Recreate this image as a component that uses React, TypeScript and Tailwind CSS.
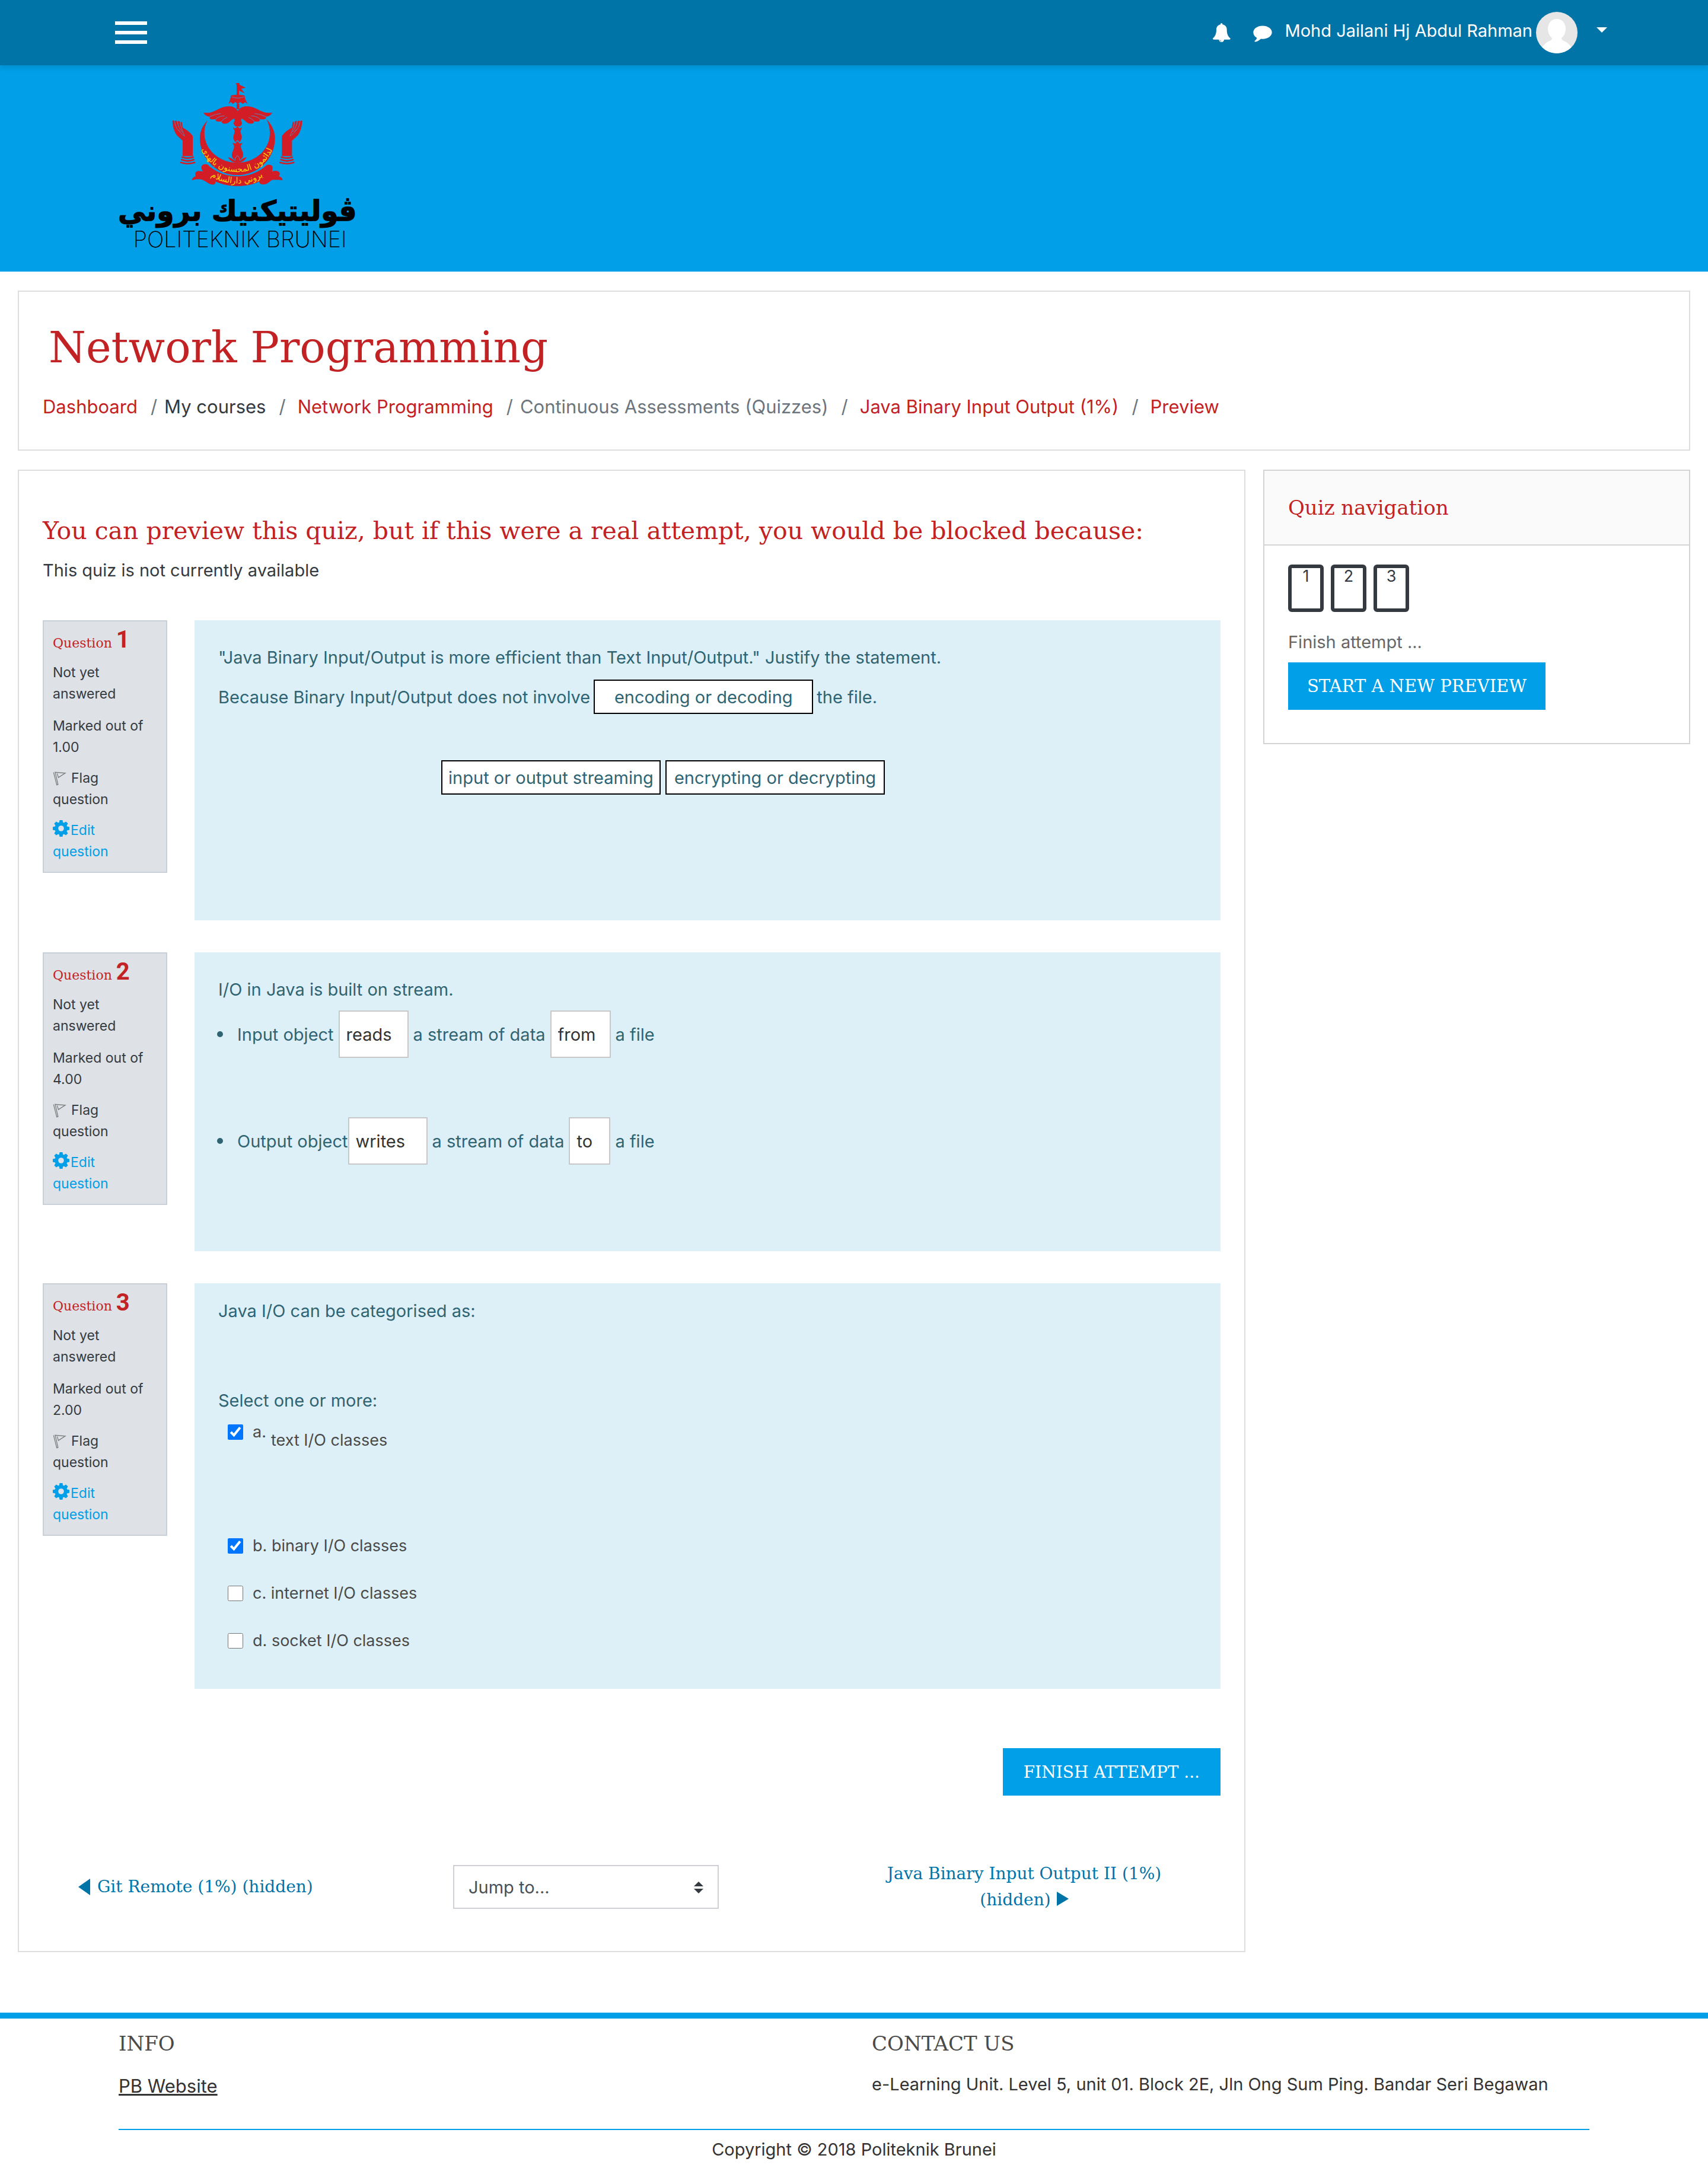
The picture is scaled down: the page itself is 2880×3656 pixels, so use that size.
import type { ReactNode } from "react";

const SERIF = "font-['DejaVu_Serif',serif]";

function Logo() {
  const hand = (
    <g>
      <path
        fill="#d31d26"
        d="M422 612C425 607 431 608 432 614L437 640L434 614C437 608 444 610 446 616L453 642L449 616C452 609 459 612 460 618L468 648L463 620C466 614 471 617 471 622L474 645C494 656 512 670 525 688V790H474V712L446 686C430 665 424 640 422 612Z"
      />
      <path
        fill="none"
        stroke="#5a86b8"
        strokeWidth="2.5"
        d="M435 618C438 640 445 655 462 668M448 618C452 640 460 655 472 668M461 620C464 640 470 655 484 688M452 655C460 670 470 680 484 688"
      />
      <path
        fill="none"
        stroke="#d31d26"
        strokeWidth="8"
        strokeLinecap="round"
        d="M472 795Q500 805 527 795M469 808Q500 820 530 808M465 822Q500 834 534 822"
      />
    </g>
  );
  const wing = (
    <g>
      <path
        fill="#d31d26"
        d="M753 562C738 530 690 532 655 552C630 567 605 575 579 569C585 580 593 588 612 590C606 602 620 607 642 602C638 612 648 618 670 614C672 626 688 630 706 620C716 612 724 602 735 599L737 612C728 622 732 634 744 640H753Z"
      />
      <path
        fill="none"
        stroke="#5a86b8"
        strokeWidth="3"
        strokeLinecap="round"
        d="M612 590C630 582 642 577 666 575M642 602C656 590 666 588 684 586M670 614C678 604 686 600 698 594"
      />
    </g>
  );
  return (
    <svg viewBox="150 420 1200 900" className="h-[300px] w-[400px] overflow-visible" role="img" aria-label="Politeknik Brunei">
      <path
        fill="#d31d26"
        d="M745 420H761V428L793 444L770 449L787 472L759 458V488H747V428H745ZM718 484C735 478 770 478 787 484L790 500L803 527L790 517L778 526L765 516L753 526L740 516L728 526L717 516L705 527C712 512 716 500 718 484ZM747 526H760V552H747Z"
      />
      <path fill="none" stroke="#5a86b8" strokeWidth="3" d="M722 490Q752 502 784 490" />
      {wing}
      <g transform="translate(1506 0) scale(-1 1)">{wing}</g>
      <path
        fill="#d31d26"
        d="M728 644L740 650L751 640L762 650L775 644L766 662C768 680 778 690 770 706L762 720L751 708L740 720L732 706C726 690 736 680 737 662ZM726 722L740 726L751 714L762 726L776 722L768 738C768 758 786 772 778 794L764 812L751 786L738 812L724 794C718 772 736 758 734 738ZM703 795C718 798 730 806 736 812L751 784L766 812C774 804 784 798 798 795C788 812 776 823 751 823C726 823 712 812 703 795Z"
      />
      <path fill="none" stroke="#5a86b8" strokeWidth="3" d="M738 813Q738 798 751 786Q764 798 764 813" />
      <path
        fill="#d31d26"
        d="M600 609C575 635 561 665 561 700C561 800 645 886 751 886C857 886 941 800 941 700C941 665 925 630 898 604C910 625 915 650 915 672C915 755 845 823 750 823C655 823 584 755 584 672C584 650 588 630 600 609Z"
      />
      <path
        fill="#d31d26"
        d="M575 834C590 826 602 832 610 842C690 908 813 908 891 842C903 828 925 832 929 845L927 868C940 862 958 862 964 874C967 885 960 892 960 892C972 895 980 902 979 912C960 908 945 910 930 910C912 915 905 935 880 933C865 932 860 925 862 918C800 950 700 948 640 918C641 934 630 938 610 930C590 920 578 908 560 907C545 906 532 908 521 912C522 900 532 894 540 891C534 880 540 865 555 865C565 865 572 868 577 868C567 855 566 842 575 834Z"
      />
      {hand}
      <g transform="translate(1501 0) scale(-1 1)">{hand}</g>
      <path id="crescent-line" fill="none" d="M574 762C600 828 670 870 751 870C832 870 902 828 930 752" />
      <path id="ribbon-line" fill="none" d="M574 858C620 905 680 928 751 928C820 928 880 905 922 858" />
      <g fill="#ffd400" textAnchor="middle" className="font-['DejaVu_Sans',sans-serif]" fontSize="42">
        <text>
          <textPath href="#crescent-line" startOffset="50%">
            الدائمون المحسنون بالهدى
          </textPath>
        </text>
        <text>
          <textPath href="#ribbon-line" startOffset="50%">
            بروني دارالسلام
          </textPath>
        </text>
      </g>
      <text
        x="751"
        y="1116"
        textAnchor="middle"
        fontSize="141"
        fontWeight="700"
        stroke="#000"
        strokeWidth="4"
        className="font-['DejaVu_Sans',sans-serif]"
      >
        ڤوليتيكنيك بروني
      </text>
      <text x="764" y="1251" textAnchor="middle" fontSize="113" fontWeight="200" className="font-['Inter',sans-serif]">
        POLITEKNIK BRUNEI
      </text>
    </svg>
  );
}

function Avatar() {
  return (
    <svg viewBox="0 0 70 70" className="size-[70px] rounded-full" aria-hidden="true">
      <rect width="70" height="70" fill="#e6e6e6" />
      <path fill="#fff" d="M35 12C45 12 50 20 50 29C50 36 46 42 43 44Q43 48 47 49C55 52 59 58 60 62Q50 72 35 72Q20 72 10 62C11 58 15 52 23 49Q27 48 27 44C24 42 20 36 20 29C20 20 25 12 35 12Z" />
    </svg>
  );
}

function BellIcon() {
  return (
    <svg viewBox="42 70 90 99" className="h-[33px] w-[30px]" aria-hidden="true">
      <path
        fill="#fff"
        d="M81 75a5 5 0 0 1 10 0l-.500 2C104 79 113 89 113 102C113 124 118 136 130 146Q133 153 126 153H99a13 13 0 0 1-26 0H47Q40 153 43 146C54 136 60 124 60 102C60 89 69 79 81.500 77Z"
      />
      <path fill="none" stroke="#0073a7" strokeWidth="2" d="M78 154a8 8 0 0 0 8 8" />
    </svg>
  );
}

function CommentIcon() {
  return (
    <svg viewBox="248 83 98 85" className="h-7 w-8" aria-hidden="true">
      <path
        fill="#fff"
        d="M297 84c27 0 48 15 48 34s-21 34-48 34q-5 0-9-.500C280 160 270 165 258 167q-5-1-2-5C263 157 266 152 267 146C255 140 249 130 249 118C249 99 270 84 297 84Z"
      />
    </svg>
  );
}

function FlagIcon() {
  return (
    <svg viewBox="32 34 68 74" className="mr-2 inline-block h-[25px] w-[23px] align-[-5px]" aria-hidden="true">
      <path fill="none" stroke="#7d7d7d" strokeWidth="4" d="M36 41L52 104L58 102L44 41L94 45L60 67L54 47" />
    </svg>
  );
}

function GearIcon() {
  return (
    <svg viewBox="-41 -41 82 82" className="mr-0.5 inline-block size-7 align-[-3px]" aria-hidden="true">
      <g fill="#009fe7">
        {[0, 45, 90, 135].map((a) => (
          <path key={a} transform={`rotate(${a})`} d="M-10 -28L-7 -41H7L10 -28V28L7 41H-7L-10 28Z" />
        ))}
        <circle r="31" />
      </g>
      <circle r="14" fill="#dee1e6" />
    </svg>
  );
}

type Tone = "link" | "dark" | "muted";

function Crumb({ children, tone }: { children: string; tone: Tone }) {
  if (tone === "link")
    return (
      <a href="#" className="text-[#c22224]">
        {children}
      </a>
    );
  return <span className={tone === "dark" ? "text-[#343a40]" : "text-[#6c757d]"}>{children}</span>;
}

const crumbs: { text: string; tone: Tone }[] = [
  { text: "Dashboard", tone: "link" },
  { text: "My courses", tone: "dark" },
  { text: "Network Programming", tone: "link" },
  { text: "Continuous Assessments (Quizzes)", tone: "muted" },
  { text: "Java Binary Input Output (1%)", tone: "link" },
  { text: "Preview", tone: "link" },
];

function Question({ n, marks, className, children }: { n: number; marks: string; className: string; children: ReactNode }) {
  return (
    <section className="flex items-start gap-[46px]">
      <div className="w-[210px] shrink-0 border-2 border-[#cad0d7] bg-[#dee1e6] px-[15px] pt-1.5 pb-4 text-[23px] leading-9 text-[#343a40]">
        <h3 className="font-['DejaVu_Serif',serif] text-[22px] leading-[50px] whitespace-nowrap text-[#c22224]">
          Question <span className="font-['Roboto',sans-serif] text-[40px] leading-[50px] font-bold">{n}</span>
        </h3>
        <div className="mt-1.5 w-32">Not yet answered</div>
        <div className="mt-[18px]">Marked out of {marks}</div>
        <button type="button" className="mt-4 block w-32 text-left">
          <FlagIcon />
          Flag question
        </button>
        <a href="#" className="mt-4 block w-32 text-[#009fe7]">
          <GearIcon />
          Edit question
        </a>
      </div>
      <div className={`min-w-0 flex-1 bg-[#ddf0f8] px-10 text-[#2f6473] ${className}`}>{children}</div>
    </section>
  );
}

function Choice({ children }: { children: string }) {
  return (
    <button
      type="button"
      className="flex h-[58px] w-[370px] items-center justify-center border-2 border-black bg-white whitespace-nowrap"
    >
      {children}
    </button>
  );
}

function Gap({ value, label, className }: { value: string; label: string; className: string }) {
  return (
    <select
      aria-label={label}
      defaultValue={value}
      className={`h-20 appearance-none rounded-none border-2 border-[#c8c8c8] bg-white pl-[11px] text-[#333] ${className}`}
    >
      <option>{value}</option>
    </select>
  );
}

function Option({ id, letter, text, checked }: { id: string; letter: string; text: string; checked?: boolean }) {
  return (
    <div className="flex h-[42px] items-center">
      <input id={id} type="checkbox" defaultChecked={checked} className="size-[26px] accent-[#0075ff]" />
      <label htmlFor={id} className="ml-4 text-[#4a4a4a]">
        {letter}. {text}
      </label>
    </div>
  );
}

export default function App() {
  return (
    <div className="bg-white font-['Inter',sans-serif] text-[29px] leading-[45px] text-[#343a40]">
      <header className="relative flex h-[110px] items-center justify-between bg-[#0073a7] pr-[170px] pl-[194px] text-white shadow-[0_4px_8px_rgba(0,0,0,0.12)]">
        <button type="button" aria-label="Menu" className="flex flex-col gap-2.5">
          <span className="h-1.5 w-[54px] bg-white" />
          <span className="h-1.5 w-[54px] bg-white" />
          <span className="h-1.5 w-[54px] bg-white" />
        </button>
        <div className="flex items-center">
          <button type="button" aria-label="Notifications">
            <BellIcon />
          </button>
          <button type="button" aria-label="Messages" className="mt-1 ml-[38px]">
            <CommentIcon />
          </button>
          <button type="button" className="ml-[22px] flex items-center">
            <span className="mr-1.5 pb-2">Mohd Jailani Hj Abdul Rahman</span>
            <Avatar />
            <svg viewBox="0 0 18 9" className="mb-2.5 ml-8 h-[9px] w-[18px]" aria-hidden="true">
              <path fill="#fff" d="M0 0H18L9 9Z" />
            </svg>
          </button>
        </div>
      </header>

      <div className="bg-[#009fe7] px-[200px] pt-[30px] pb-[18px]">
        <Logo />
      </div>

      <main className="px-[30px] pt-8">
        <div className="border-2 border-[#dedede] px-10 pt-[52px] pb-12">
          <h1 className={`ml-2.5 text-[72px] leading-[84px] text-[#c22224] ${SERIF}`}>Network Programming</h1>
          <nav aria-label="Breadcrumb" className="mt-[34px] text-[31px] leading-12">
            <ol className="flex">
              {crumbs.map((c, i) => (
                <li key={c.text} className="flex">
                  {i > 0 && (
                    <span className={`pl-[22px] text-[#6c757d] ${c.tone === "link" ? "pr-5" : "pr-3"}`}>/</span>
                  )}
                  <Crumb tone={c.tone}>{c.text}</Crumb>
                </li>
              ))}
            </ol>
          </nav>
        </div>

        <div className="mt-8 grid grid-cols-[23fr_8fr] items-start gap-[30px]">
          <div className="border-2 border-[#dedede] px-10 pt-[77px] pb-16">
            <h2 className={`text-[41px] leading-12 text-[#c22224] ${SERIF}`}>
              You can preview this quiz, but if this were a real attempt, you would be blocked because:
            </h2>
            <p className="mt-5">This quiz is not currently available</p>

            <div className="mt-[62px] flex flex-col gap-[54px]">
              <Question n={1} marks="1.00" className="pt-10 pb-[212px]">
                <p>"Java Binary Input/Output is more efficient than Text Input/Output." Justify the statement.</p>
                <div className="mt-[15px] flex items-center gap-1.5">
                  Because Binary Input/Output does not involve
                  <Choice>encoding or decoding</Choice>
                  the file.
                </div>
                <div className="mt-[78px] flex justify-center gap-2 pr-[150px]">
                  <Choice>input or output streaming</Choice>
                  <Choice>encrypting or decrypting</Choice>
                </div>
              </Question>

              <Question n={2} marks="4.00" className="pt-10 pb-[146px]">
                <p>I/O in Java is built on stream.</p>
                <ul className="mt-[13px] flex flex-col gap-[100px]">
                  <li className="flex items-center">
                    <span className="mr-6 -ml-0.5 size-2.5 rounded-full bg-[#2f6473]" />
                    Input object
                    <Gap value="reads" label="Input action" className="mx-2 w-[118px]" />
                    a stream of data
                    <Gap value="from" label="Input direction" className="mx-2 w-[102px]" />a file
                  </li>
                  <li className="flex items-center">
                    <span className="mr-6 -ml-0.5 size-2.5 rounded-full bg-[#2f6473]" />
                    Output object
                    <Gap value="writes" label="Output action" className="mr-2 w-[134px]" />
                    a stream of data
                    <Gap value="to" label="Output direction" className="mx-2 w-[70px]" />a file
                  </li>
                </ul>
              </Question>

              <Question n={3} marks="2.00" className="pt-6 pb-[60px]">
                <p>Java I/O can be categorised as:</p>
                <fieldset className="mt-[106px]">
                  <legend>Select one or more:</legend>
                  <div className="mt-2.5 flex flex-col gap-[38px] pl-4 text-[27px] leading-[42px]">
                    <div className="flex h-[154px] items-start">
                      <input
                        id="q3a"
                        type="checkbox"
                        defaultChecked
                        className="mt-2 size-[26px] accent-[#0075ff]"
                      />
                      <label htmlFor="q3a" className="ml-4 flex gap-2 text-[#4a4a4a]">
                        <span>a.</span>
                        <span className="mt-3.5">text I/O classes</span>
                      </label>
                    </div>
                    <Option id="q3b" letter="b" text="binary I/O classes" checked />
                    <Option id="q3c" letter="c" text="internet I/O classes" />
                    <Option id="q3d" letter="d" text="socket I/O classes" />
                  </div>
                </fieldset>
              </Question>
            </div>

            <div className="mt-[100px] flex justify-end">
              <button type="button" className={`h-20 bg-[#009fe7] px-[35px] text-[28px] whitespace-nowrap text-white ${SERIF}`}>
                FINISH ATTEMPT ...
              </button>
            </div>

            <div className={`mt-[110px] grid grid-cols-3 items-center text-[#0073a7] ${SERIF}`}>
              <a href="#" className="flex items-center gap-3 pl-[60px] text-[28px] leading-11">
                <svg viewBox="0 0 20 28" className="h-7 w-5" aria-hidden="true">
                  <path fill="#0073a7" d="M20 0V28L0 14Z" />
                </svg>
                Git Remote (1%) (hidden)
              </a>
              <div className="relative ml-[30px] w-[448px]">
                <select
                  aria-label="Jump to"
                  className="h-[74px] w-full appearance-none rounded-none border-2 border-[#ced0d6] bg-white pl-6 font-['Inter',sans-serif] text-[29px] text-[#495057]"
                >
                  <option>Jump to...</option>
                </select>
                <svg viewBox="0 0 16 20" className="pointer-events-none absolute top-7 right-[26px] h-5 w-4" aria-hidden="true">
                  <path fill="#343a40" d="M8 0L16 8H0ZM8 20L0 12H16Z" />
                </svg>
              </div>
              <a href="#" className="mx-[60px] text-center text-[28px] leading-11">
                Java Binary Input Output II (1%) (hidden)
                <svg viewBox="0 0 20 24" className="ml-2.5 inline-block h-6 w-5 align-[-1px]" aria-hidden="true">
                  <path fill="#0073a7" d="M0 0V24L20 12Z" />
                </svg>
              </a>
            </div>
          </div>

          <aside className="border-2 border-[#d4d4d4]">
            <h2 className={`border-b-2 border-[#d4d4d4] bg-[#fafafa] px-10 py-[38px] text-[34px] leading-12 text-[#c22224] ${SERIF}`}>
              Quiz navigation
            </h2>
            <div className="px-10 pt-8 pb-14">
              <div className="flex gap-3">
                {[1, 2, 3].map((n) => (
                  <a
                    key={n}
                    href="#"
                    className="h-20 w-[60px] rounded-md border-[6px] border-[#343a40] bg-white text-center text-[27px] leading-7"
                  >
                    {n}
                  </a>
                ))}
              </div>
              <a href="#" className="mt-7 block text-[#666]">
                Finish attempt ...
              </a>
              <button type="button" className={`mt-3 h-20 bg-[#009fe7] px-8 text-[29px] whitespace-nowrap text-white ${SERIF}`}>
                START A NEW PREVIEW
              </button>
            </div>
          </aside>
        </div>
      </main>

      <footer className="mt-[102px] border-t-[10px] border-[#009fe7] px-[200px] pt-5 pb-2 text-[#333]">
        <div className="grid grid-cols-[1270fr_1210fr] border-b-2 border-[#009fe7] pb-12">
          <div>
            <h3 className={`text-[34px] leading-11 text-[#4a4a4a] ${SERIF}`}>INFO</h3>
            <a href="#" className="mt-[26px] block text-[31px] leading-12 underline">
              PB Website
            </a>
          </div>
          <div>
            <h3 className={`text-[34px] leading-11 text-[#4a4a4a] ${SERIF}`}>CONTACT US</h3>
            <p className="mt-6">e-Learning Unit. Level 5, unit 01. Block 2E, Jln Ong Sum Ping. Bandar Seri Begawan</p>
          </div>
        </div>
        <p className="mt-2.5 text-center">Copyright © 2018 Politeknik Brunei</p>
      </footer>
    </div>
  );
}
